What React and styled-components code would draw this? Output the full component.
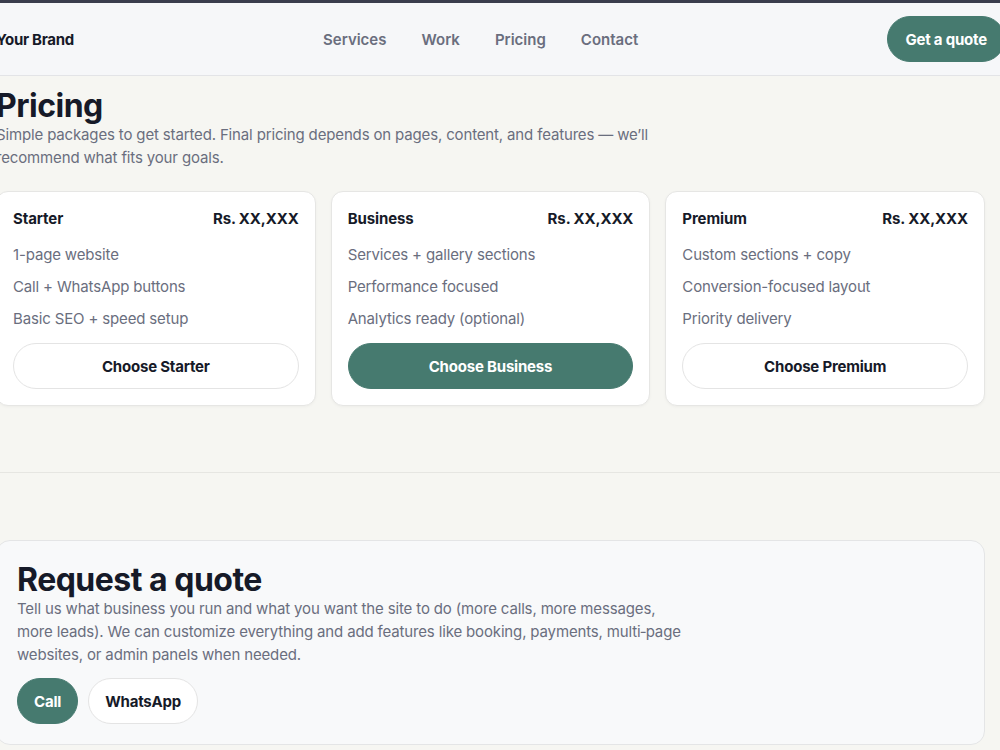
import React from "react";
import styled, { createGlobalStyle } from "styled-components";

const Global = createGlobalStyle`
  html, body { margin: 0; padding: 0; }
  body {
    background: #f6f6f2;
    font-family: Inter, "Noto Sans", sans-serif;
    color: #161a28;
    overflow: hidden;
    -webkit-font-smoothing: antialiased;
  }
  * { box-sizing: border-box; }
`;

const TopBar = styled.div`
  height: 3px;
  background: #3a3d4d;
`;

const Header = styled.header`
  height: 73px;
  background: #f6f7f9;
  border-bottom: 1px solid #e3e4e7;
`;

const HeaderInner = styled.div`
  margin-left: -4px;
  width: 1009px;
  height: 100%;
  display: flex;
  align-items: center;
  justify-content: space-between;
`;

const Logo = styled.div`
  font-size: 15px;
  font-weight: 700;
  letter-spacing: -0.3px;
  color: #161a28;
`;

const Nav = styled.nav`
  display: flex;
  gap: 35px;
`;

const NavLink = styled.a`
  font-size: 15px;
  font-weight: 600;
  color: #6a6e7e;
  text-decoration: none;
`;

const PillButton = styled.button`
  height: 46px;
  padding: 0 ${(p) => p.$pad || 16}px;
  border-radius: 999px;
  font-family: inherit;
  font-size: 15px;
  font-weight: 700;
  letter-spacing: -0.2px;
  cursor: pointer;
  border: 1px solid ${(p) => (p.$primary ? "#467a6f" : "#e4e4e4")};
  background: ${(p) => (p.$primary ? "#467a6f" : "#ffffff")};
  color: ${(p) => (p.$primary ? "#ffffff" : "#161a28")};
  width: ${(p) => (p.$block ? "100%" : "auto")};
`;

const Container = styled.div`
  margin-left: -4px;
  width: 989px;
`;

const PricingSection = styled.section`
  padding: 12px 0 66px;
  border-bottom: 1px solid #e6e6e2;
`;

const Title = styled.h1`
  margin: 0;
  font-size: 32px;
  line-height: 1.1;
  font-weight: 700;
  letter-spacing: -0.5px;
  color: #161a28;
`;

const Lead = styled.p`
  margin: 0;
  max-width: ${(p) => p.$max || 680}px;
  font-size: 15px;
  line-height: 23px;
  letter-spacing: -0.15px;
  color: #6a6e7e;
`;

const Cards = styled.div`
  margin-top: 22px;
  display: grid;
  grid-template-columns: repeat(3, 1fr);
  gap: 15px;
`;

const Card = styled.div`
  background: #ffffff;
  border: 1px solid #e6e6e4;
  border-radius: 12px;
  padding: 16px;
  box-shadow: 0 1px 3px rgba(20, 20, 20, 0.04);
`;

const CardHead = styled.div`
  display: flex;
  justify-content: space-between;
  align-items: center;
  line-height: 22px;
  font-size: 15px;
  font-weight: 700;
  letter-spacing: -0.1px;
  color: #161a28;
`;

const Features = styled.ul`
  list-style: none;
  margin: 14px 0 13px;
  padding: 0;
  display: flex;
  flex-direction: column;
  gap: 10px;
`;

const Feature = styled.li`
  font-size: 15px;
  line-height: 22px;
  letter-spacing: -0.15px;
  color: #6a6e7e;
`;

const QuoteSection = styled.section`
  padding-top: 67px;
`;

const QuoteCard = styled.div`
  background: #f8f9fa;
  border: 1px solid #e4e5e6;
  border-radius: 14px;
  padding: 21px 20px 20px;
`;

const QuoteTitle = styled.h2`
  margin: 0;
  font-size: 32px;
  line-height: 1.1;
  font-weight: 700;
  letter-spacing: -0.5px;
  color: #161a28;
`;

const Actions = styled.div`
  margin-top: 12px;
  display: flex;
  gap: 10px;
`;

const plans = [
  {
    name: "Starter",
    features: ["1-page website", "Call + WhatsApp buttons", "Basic SEO + speed setup"],
    cta: "Choose Starter",
  },
  {
    name: "Business",
    features: ["Services + gallery sections", "Performance focused", "Analytics ready (optional)"],
    cta: "Choose Business",
    primary: true,
  },
  {
    name: "Premium",
    features: ["Custom sections + copy", "Conversion-focused layout", "Priority delivery"],
    cta: "Choose Premium",
  },
];

export default function App() {
  return (
    <>
      <Global />
      <TopBar />
      <Header>
        <HeaderInner>
          <Logo>Your Brand</Logo>
          <Nav>
            <NavLink>Services</NavLink>
            <NavLink>Work</NavLink>
            <NavLink>Pricing</NavLink>
            <NavLink>Contact</NavLink>
          </Nav>
          <PillButton $primary $pad={17}>Get a quote</PillButton>
        </HeaderInner>
      </Header>
      <PricingSection>
        <Container>
          <Title>Pricing</Title>
          <Lead>
            Simple packages to get started. Final pricing depends on pages, content, and features — we’ll
            recommend what fits your goals.
          </Lead>
          <Cards>
            {plans.map((p) => (
              <Card key={p.name}>
                <CardHead>
                  <span>{p.name}</span>
                  <span>Rs. XX,XXX</span>
                </CardHead>
                <Features>
                  {p.features.map((f) => (
                    <Feature key={f}>{f}</Feature>
                  ))}
                </Features>
                <PillButton $block $primary={p.primary}>{p.cta}</PillButton>
              </Card>
            ))}
          </Cards>
        </Container>
      </PricingSection>
      <QuoteSection>
        <Container>
          <QuoteCard>
            <QuoteTitle>Request a quote</QuoteTitle>
            <Lead $max={672}>
              Tell us what business you run and what you want the site to do (more calls, more messages,
              more leads). We can customize everything and add features like booking, payments, multi&#8209;page
              websites, or admin panels when needed.
            </Lead>
            <Actions>
              <PillButton $primary>Call</PillButton>
              <PillButton>WhatsApp</PillButton>
            </Actions>
          </QuoteCard>
        </Container>
      </QuoteSection>
    </>
  );
}
